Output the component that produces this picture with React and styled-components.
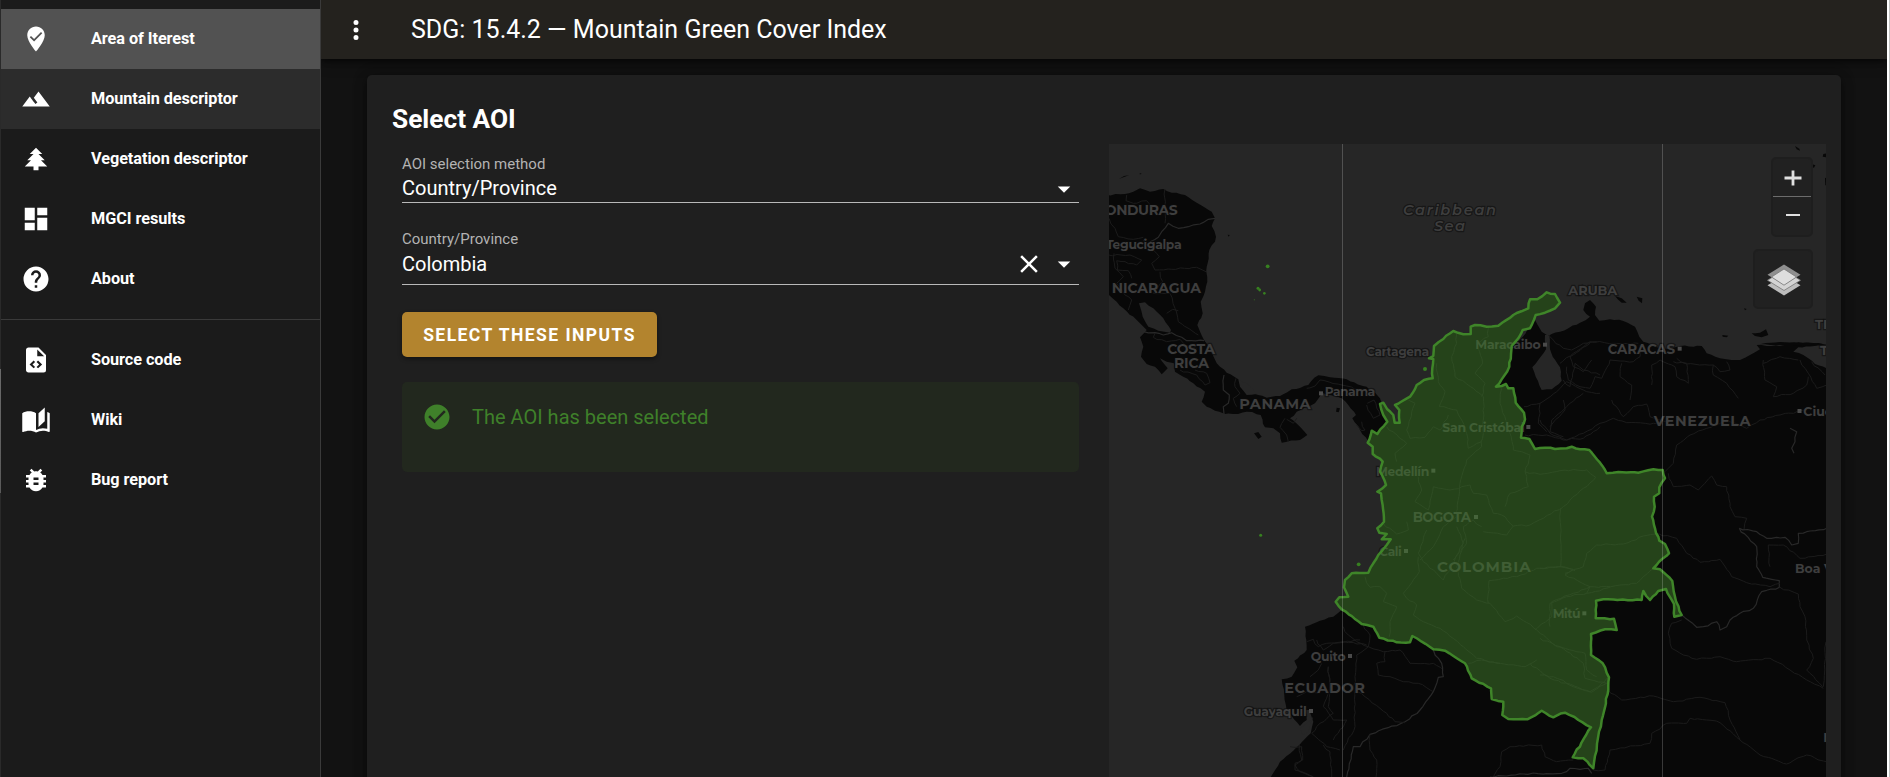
import React from "react";
import styled, { createGlobalStyle, css } from "styled-components";

const GlobalStyle = createGlobalStyle`
  *, *::before, *::after { box-sizing: border-box; }
  body {
    margin: 0;
    background: #121212;
    color: #fff;
    font-family: Roboto, "Liberation Sans", sans-serif;
    overflow: hidden;
  }
`;

/* ---------- layout ---------- */

const Page = styled.div`
  display: flex;
  width: 100vw;
  height: 100vh;
  overflow: hidden;
  background: #121212;
`;

const LeftEdge = styled.div`
  width: 1px;
  flex: none;
  background: linear-gradient(#2a2a2a 369px, #6a6a6a 369px, #5a5a5a 493px, #2a2a2a 493px);
`;

const Drawer = styled.nav`
  position: relative;
  z-index: 1;
  width: 320px;
  flex: none;
  padding-top: 9px;
  background: #1b1b1b;
  border-right: 1px solid #3a3a3a;
`;

const Main = styled.div`
  flex: 1;
  min-width: 0;
  display: flex;
  flex-direction: column;
`;

const RightEdge = styled.div`
  width: 3px;
  flex: none;
  background: #fff;
  border-right: 1px solid #c1c1c1;
`;

const AppBar = styled.header`
  height: 59px;
  flex: none;
  display: flex;
  align-items: center;
  padding: 0 0 0 20px;
  background: #24221e;
  box-shadow: 0 2px 5px rgba(0, 0, 0, 0.5), 0 5px 12px rgba(0, 0, 0, 0.25);
`;

const AppTitle = styled.h1`
  margin: 0 0 0 40px;
  font-size: 25px;
  line-height: 30px;
  font-weight: 400;
  white-space: nowrap;
`;

/* ---------- drawer ---------- */

const NavItem = styled.a`
  height: 60px;
  display: flex;
  align-items: center;
  gap: 40px;
  padding-left: 20px;
  background: ${(p) =>
    p.$state === "active" ? "#525252" : p.$state === "hover" ? "#2c2c2c" : "transparent"};
`;

const NavLabel = styled.span`
  font-size: 16.25px;
  line-height: 20px;
  font-weight: 700;
  letter-spacing: -0.06px;
  white-space: nowrap;
`;

const Divider = styled.hr`
  margin: 10px 0;
  border: 0;
  height: 1px;
  background: #3a3a3a;
`;

/* ---------- card ---------- */

const Content = styled.main`
  flex: 1;
  min-height: 0;
  padding: 16px 46px 0;
`;

const Card = styled.section`
  height: 760px;
  padding: 24px 15px 0 25px;
  border-radius: 5px;
  background: #1f1f1f;
  box-shadow: 0 4px 5px rgba(0, 0, 0, 0.2), 0 5px 13px rgba(0, 0, 0, 0.24), 0 1px 16px rgba(0, 0, 0, 0.2);
`;

const CardTitle = styled.h2`
  margin: 0;
  height: 45px;
  font-size: 26.25px;
  line-height: 40px;
  font-weight: 700;
`;

const Columns = styled.div`
  display: flex;
  gap: 30px;
  padding-left: 10px;
`;

const Form = styled.div`
  width: 677px;
  flex: none;
  display: flex;
  flex-direction: column;
  align-items: stretch;
  padding-top: 10px;
`;

const Field = styled.div`
  height: ${(p) => p.$height}px;
  margin-bottom: ${(p) => p.$gap}px;
  display: flex;
  flex-direction: column;
  border-bottom: 1px solid #b9b9b9;
`;

const FieldLabel = styled.span`
  font-size: 15px;
  line-height: 20px;
  color: #b3b3b3;
`;

const FieldRow = styled.div`
  flex: 1;
  display: flex;
  align-items: center;
  padding-bottom: ${(p) => p.$lift || 0}px;
`;

const FieldValue = styled.span`
  flex: 1;
  padding-bottom: ${(p) => p.$lift || 0}px;
  font-size: 20px;
  line-height: 26px;
`;

const FieldIcons = styled.span`
  display: flex;
  gap: 5px;
  align-items: center;
`;

const Submit = styled.button`
  align-self: flex-start;
  width: 255px;
  height: 45px;
  padding: 0;
  border: 0;
  border-radius: 5px;
  background: #b3842e;
  color: #fff;
  font: 700 17.5px Roboto, "Liberation Sans", sans-serif;
  letter-spacing: 1.45px;
  box-shadow: 0 2px 4px rgba(0, 0, 0, 0.4);
`;

const Alert = styled.div`
  height: 90px;
  margin-top: 25px;
  padding: 20px;
  display: flex;
  align-items: flex-start;
  gap: 20px;
  border-radius: 5px;
  background: #22281e;
  color: #3f802a;
  font-size: 20px;
  line-height: 30px;
`;

/* ---------- map ---------- */

const MapFrame = styled.div`
  position: relative;
  width: 717px;
  height: 640px;
  flex: none;
  overflow: hidden;
  background: #262626;
`;

const MapSvg = styled.svg`
  display: block;
`;

const MapControls = styled.div`
  position: absolute;
  top: 13px;
  right: 13px;
  display: flex;
  flex-direction: column;
  align-items: flex-end;
  gap: 12px;
`;

const controlBox = css`
  border: 2px solid #1e1e1e;
  border-radius: 5px;
  background: #212121;
`;

const ZoomBox = styled.div`
  ${controlBox}
  width: 42px;
  height: 80px;
`;

const ZoomButton = styled.div`
  height: ${(p) => (p.$first ? 38 : 36)}px;
  padding-left: 2px;
  display: flex;
  align-items: center;
  justify-content: center;
  ${(p) => p.$first && "border-bottom: 1px solid #6c6c6c;"}
`;

const LayersBox = styled.div`
  ${controlBox}
  width: 60px;
  height: 60px;
  padding: 1px 0 0 1px;
  display: flex;
  align-items: center;
  justify-content: center;
`;

const MapLabel = styled.text`
  font-family: Montserrat, Inter, "Open Sans", sans-serif;
  font-weight: ${(p) => p.$weight || 700};
  font-style: ${(p) => (p.$italic ? "italic" : "normal")};
  fill: #3e3e3e;
  stroke: rgba(10, 10, 10, 0.55);
  stroke-width: 2.5px;
  paint-order: stroke;
`;

/* ---------- icons ---------- */

const ICONS = {
  marker:
    "M12,2C15.86,2 19,5.14 19,9C19,14.25 12,22 12,22C12,22 5,14.25 5,9C5,5.14 8.14,2 12,2M10.47,14L17,7.41L16,6.4L10.47,12L8,9.5L7,10.5L10.47,14Z",
  mountain: "M14,6L10.25,11L13.1,14.8L11.5,16C9.81,13.75 7,10 7,10L1,18H23L14,6Z",
  tree: "M10,21V18H3L8,13H5L10,8H7L12,3L17,8H14L19,13H16L21,18H14V21H10Z",
  dashboard: "M13,3V9H21V3M13,21H21V11H13M3,21H11V15H3M3,13H11V3H3V13Z",
  help: "M15.07,11.25L14.17,12.17C13.45,12.89 13,13.5 13,15H11V14.5C11,13.39 11.45,12.39 12.17,11.67L13.41,10.41C13.78,10.05 14,9.55 14,9C14,7.89 13.1,7 12,7A2,2 0 0,0 10,9H8A4,4 0 0,1 12,5A4,4 0 0,1 16,9C16,9.88 15.64,10.67 15.07,11.25M13,19H11V17H13M12,2A10,10 0 0,0 2,12A10,10 0 0,0 12,22A10,10 0 0,0 22,12C22,6.47 17.5,2 12,2Z",
  code: "M13,9H18.5L13,3.5V9M6,2H14L20,8V20A2,2 0 0,1 18,22H6C4.89,22 4,21.1 4,20V4C4,2.89 4.89,2 6,2M6.85,15.5L10.1,18.6L11.28,17.5L9.2,15.5L11.28,13.5L10.1,12.4L6.85,15.5M16.9,15.5L13.65,12.4L12.45,13.5L14.5,15.5L12.45,17.5L13.65,18.6L16.9,15.5Z",
  book: "M19 2L14 6.5V17.5L19 13V2M6.5 5C4.55 5 2.45 5.4 1 6.5V21.16C1 21.41 1.25 21.66 1.5 21.66C1.6 21.66 1.65 21.59 1.75 21.59C3.1 20.94 5.05 20.5 6.5 20.5C8.45 20.5 10.55 20.9 12 22C13.35 21.15 15.8 20.5 17.5 20.5C19.15 20.5 20.85 20.81 22.25 21.56C22.35 21.61 22.4 21.59 22.5 21.59C22.75 21.59 23 21.34 23 21.09V6.5C22.4 6.05 21.75 5.75 21 5.5V19C19.9 18.65 18.7 18.5 17.5 18.5C15.8 18.5 13.35 19.15 12 20V6.5C10.55 5.4 8.45 5 6.5 5Z",
  bug: "M14,12H10V10H14M14,16H10V14H14M20,8H17.19C16.74,7.22 16.12,6.55 15.37,6.04L17,4.41L15.59,3L13.42,5.17C12.96,5.06 12.5,5 12,5C11.5,5 11.05,5.06 10.59,5.17L8.41,3L7,4.41L8.62,6.04C7.88,6.55 7.26,7.22 6.81,8H4V10H6.09C6.04,10.33 6,10.66 6,11V12H4V14H6V15C6,15.34 6.04,15.67 6.09,16H4V18H6.81C7.85,19.79 9.78,21 12,21C14.22,21 16.15,19.79 17.19,18H20V16H17.91C17.96,15.67 18,15.34 18,15V14H20V12H18V11C18,10.66 17.96,10.33 17.91,10H20V8Z",
  check:
    "M12 2C6.5 2 2 6.5 2 12S6.5 22 12 22 22 17.5 22 12 17.5 2 12 2M10 17L5 12L6.41 10.59L10 14.17L17.59 6.58L19 8L10 17Z",
  dots: "M12,16A2,2 0 0,1 14,18A2,2 0 0,1 12,20A2,2 0 0,1 10,18A2,2 0 0,1 12,16M12,10A2,2 0 0,1 14,12A2,2 0 0,1 12,14A2,2 0 0,1 10,12A2,2 0 0,1 12,10M12,4A2,2 0 0,1 14,6A2,2 0 0,1 12,8A2,2 0 0,1 10,6A2,2 0 0,1 12,4Z",
  close:
    "M19,6.41L17.59,5L12,10.59L6.41,5L5,6.41L10.59,12L5,17.59L6.41,19L12,13.41L17.59,19L19,17.59L13.41,12L19,6.41Z",
  down: "M7,10L12,15L17,10H7Z",
};

const IconSvg = styled.svg`
  flex: none;
  display: block;
  fill: currentColor;
`;

const Icon = ({ name, size = 30 }) => (
  <IconSvg width={size} height={size} viewBox="0 0 24 24">
    <path fillRule="evenodd" d={ICONS[name]} />
  </IconSvg>
);

/* ---------- map geometry ---------- */

const SHEETS = {
  central: [1100, 140],
  north: [1300, 260],
  south: [1290, 500],
  caribbean: [1560, 60],
  east: [1540, 400],
  pacific: [1100, 450],
};

const at = (sheet, flat) => {
  const [ox, oy] = SHEETS[sheet];
  const nums = flat.trim().split(/\s+/).map(Number);
  const out = [];
  for (let i = 0; i < nums.length; i += 2) out.push([ox + nums[i] / 3, oy + nums[i + 1] / 3]);
  return out;
};

// Adds small deterministic wiggles between vertices, as a coast or river has.
const rough = (pts, amount, closed) => {
  let seed = 7;
  const rnd = () => {
    seed = (seed * 16807) % 2147483647;
    return seed / 2147483647 - 0.5;
  };
  let d = "";
  pts.forEach((p, i) => {
    d += `${i ? "L" : "M"}${p[0].toFixed(1)} ${p[1].toFixed(1)}`;
    const q = pts[i + 1] || (closed ? pts[0] : null);
    if (!q) return;
    const n = Math.min(8, Math.floor(Math.hypot(q[0] - p[0], q[1] - p[1]) / 4));
    for (let k = 1; k < n; k += 1) {
      const t = k / n;
      d += `L${(p[0] + (q[0] - p[0]) * t + rnd() * amount).toFixed(1)} ${(p[1] + (q[1] - p[1]) * t + rnd() * amount).toFixed(1)}`;
    }
  });
  return closed ? `${d}Z` : d;
};

const COLOMBIA = rough(
  [
    ...at("north", `740 97 765 102 780 128 765 145 735 158 707 165 690 205 668 210 655 235 635 258 628 320 612 348
      588 380 605 378 618 372 625 385 640 385 647 428 672 458 675 478 665 500 663 533 688 537 705 567 735 563 765 567
      800 565 815 560 840 568 868 570 900 608`),
    ...at("east", `200 220 235 216 295 218 340 208 368 210 375 235 358 262 358 280 342 290 344 320 336 350 345 385
      358 422 375 432 387 460 340 505 360 508 397 543 405 590 425 645 403 650 402 612 378 567 355 573 330 600 310 573
      305 600 190 598 168 602 167 655 222 656 230 690 195 688 153 702 153 765 188 790 207 832 205 870 185 960 160 1105
      130 1075 98 1072 153 982`),
    ...at("south", `865 660 825 638 790 652 755 632 712 658 655 657 637 645 640 605 605 597 603 565 545 535 525 490
      465 452 430 448 395 425 367 408 360 427 320 427 268 413 250 380 215 372 155 328 137 305 148 292 175 290 162 262
      165 240 185 220 235 218 250 190 265 165 290 135 302 118 275 118 290 102 268 98 262 85 282 65 275 0`),
    ...at("north", `243 700 232 695 258 675 240 635 248 605 218 582 218 560 203 548 215 512 232 522 262 485 250 465
      240 432 250 428 262 448 280 465 284 488 299 488 298 450 285 435 330 410 350 375 372 360 398 355 397 325 400 297
      387 295 400 288 402 258 430 237 460 213 490 223 512 222 512 200 525 195 560 200 595 197 640 165 685 145 690 118
      712 118`),
  ],
  1.2,
  true
);

const CENTRAL_AMERICA = rough(
  at("central", `20 165 75 162 100 155 120 145 150 155 190 147 215 158 255 165 290 188 335 215 345 235 335 258 348 290
    345 305 328 330 320 380 322 425 315 455 302 485 308 520 292 555 312 600 330 632 350 670 380 698 415 718 440 755
    465 762 500 773 540 768 575 748 625 735 655 706 690 712 740 718 800 740 825 758 840 775 880 850 805 905 780 870
    757 835 768 825 745 795 725 775 690 765 665 758 645 790 625 800 590 815 570 835 600 860 622 885 600 900 545 908
    540 880 520 865 495 862 482 825 440 815 400 822 375 822 345 812 320 800 305 785 315 755 280 730 250 710 225 695
    222 670 200 665 180 655 203 685 185 703 165 680 140 672 123 650 130 620 120 592 140 570 110 540 70 505 27 465
    20 460`),
  1.6,
  true
);

const SOUTH_AMERICA = rough(
  [
    ...at("pacific", `725 480 700 500 660 512 615 530 620 600 583 632 592 652 575 680 545 688 553 735 560 780 600 828
      620 810 615 780 628 780 640 815 632 850 598 885 540 935 510 985`),
    [1832, 779],
    [1832, 370],
    ...at("caribbean", `800 925 765 912 745 895 730 885 700 875 715 862 800 852 740 848 690 850 660 858 590 855 600 868
      570 885 540 900 515 900 480 895 440 880 425 858 360 858 330 868 290 862 250 845 238 830 225 800 190 783 150 778
      118 782 105 765 108 740 90 720 75 730 70 750 90 770 60 788 0 815`),
    ...at("north", "745 228 725 215 705 180"),
    [1520, 340],
    [1450, 400],
    [1400, 500],
    [1370, 600],
  ],
  1.4,
  true
);

const LAKES = [
  at("central", "117 490 135 487 160 505 190 535 213 570 210 578 175 572 145 560 128 530"),
  at("north", "735 225 738 268 715 300 697 322 707 350 725 390 755 388 785 362 780 322 758 290 750 268 748 225"),
  at("central", "415 718 440 730 470 762 440 765 420 740"),
  at("pacific", "640 800 625 845 608 855 600 835 622 818"),
];

const ISLETS = [
  at("caribbean", "575 820 600 818 618 808 625 825 605 832 585 828"),
  at("caribbean", "165 708 185 715 200 728 185 728"),
  at("caribbean", "230 710 247 715 246 730 236 722"),
  at("caribbean", "487 825 505 827 500 832 488 830"),
  at("caribbean", "552 745 560 747 555 751"),
  at("caribbean", "705 258 718 266 720 272 710 268"),
  at("caribbean", "790 282 800 280 800 292 788 290"),
  at("caribbean", "755 312 766 316 762 323 756 322"),
  at("caribbean", "795 355 802 352 802 380 796 375"),
  at("central", "462 880 475 876 485 890 475 897"),
  at("central", "710 803 720 805 716 817 708 815"),
  at("central", "135 535 150 532 155 546 138 545"),
  at("central", "57 117 72 108 87 106 70 112"),
  at("central", "117 102 124 99 123 103"),
  at("central", "383 284 389 285 386 290"),
];

const BORDERS = [
  ["central", "345 235 325 238 300 252 265 260 235 265 205 250 185 275 175 292 150 305", 1],
  ["central", "130 575 165 578 190 585 215 578 245 592 260 602 312 602", 1],
  ["central", "372 705 370 750 388 765 385 790 370 800 372 822", 1],
  ["central", "195 147 195 250"],
  ["central", "27 235 45 265 55 290 100 298 130 292"],
  ["central", "80 165 78 182 100 190 140 182 155 200"],
  ["central", "27 345 90 345 125 360 110 375 50 362 52 390 85 392 95 415"],
  ["central", "130 300 160 330 178 350 155 370 165 390 215 388 290 382 318 395"],
  ["central", "180 395 188 425 160 460 210 460 225 505 235 545 295 585"],
  ["central", "200 520 218 508 235 512"],
  ["central", "42 340 45 385 70 410 50 430 75 465 95 480 85 510"],
  ["central", "165 580 160 592 200 605 240 598 255 615 290 625"],
  ["central", "240 690 290 705 315 735 330 728 320 700 285 690"],
  ["central", "408 715 405 740 420 760 400 775 410 800"],
  ["central", "555 835 540 862 560 885 565 905"],
  ["central", "560 838 580 850 590 835"],
  ["central", "620 745 645 738 660 720 740 738 790 755"],
  ["central", "800 795 820 835 840 825 822 780 802 790"],
  ["central", "770 855 785 872 795 870 785 845"],
  ["north", "470 222 470 250 455 290 465 350 520 385 550 410 550 480 545 560 500 600 480 670 468 760"],
  ["north", "565 205 565 230 530 250 548 310 525 340 555 370 545 410"],
  ["north", "410 310 415 365 435 395 418 440 470 450 485 480 500 520 505 565 545 545"],
  ["north", "325 420 345 430 320 510 330 535 375 532 400 500 420 510 445 465"],
  ["north", "260 500 320 550 285 580 290 605"],
  ["north", "605 385 600 430 630 520 640 570 665 575 690 585 675 635 685 680 630 700 615 740"],
  ["north", "675 635 720 643 780 632 860 630 887 652 850 685 790 740 730 775 690 795 640 798 620 825 550 815"],
  ["north", "355 650 365 690 345 725 385 750 400 680 450 690 510 675 520 700 560 705 580 760 605 765 640 798"],
  ["north", "782 745 782 920"],
  ["north", "470 770 430 800 400 860 360 900"],
  ["north", "545 800 520 780 490 800 500 850 460 900"],
  ["north", "250 790 290 822 325 810 320 785"],
  ["north", "745 225 760 240 790 265 815 270 850 250 890 245"],
  ["north", "672 440 720 430 770 395 800 365 860 395 900 400"],
  ["north", "790 360 810 380 825 310 850 330 900 345"],
  ["north", "675 525 740 525 790 540 850 535 900 500"],
  ["north", "850 400 810 430 755 480 750 515 790 530"],
  ["north", "720 430 720 460 715 490 740 515"],
  ["south", "385 170 388 215 340 280 350 295 380 315 370 345 400 365 450 385 520 440 560 475 620 490 705 500 740 480"],
  ["south", "525 115 500 200 515 265 560 300 600 310 645 365 680 348 740 390 800 440 885 460 890 510 920 530"],
  ["south", "595 310 597 242 680 230 740 205 820 200 855 212"],
  ["south", "225 230 240 262 270 260 290 280 280 305 320 320 300 365 298 410"],
  ["south", "535 490 575 480 630 490"],
  ["south", "735 390 785 350 785 305 850 280 900 260 960 260"],
  ["south", "720 490 780 535 850 560 905 577 960 530"],
  ["south", "410 90 385 160 400 185 460 240 520 130 500 80"],
  ["south", "220 375 240 405 235 440 280 455 330 450 360 490 430 490 460 510"],
  ["south", "430 450 455 490 460 530 445 532 430 575 390 630 345 665 240 703 210 740 190 740 170 831", 1],
  ["south", "285 455 285 485 260 490 265 525 300 530 340 545 385 550 430 575"],
  ["south", "195 565 225 590 270 625 315 665 345 668"],
  ["south", "160 380 175 405 200 425 235 440 200 465 195 530 192 570 195 680 160 750"],
  ["south", "80 420 100 450 130 430 210 420"],
  ["south", "115 500 120 560 100 620 130 660 170 660 130 720"],
  ["south", "240 703 240 750 260 780 258 831"],
  ["south", "610 831 630 800 635 755 660 740 755 735 765 770 800 785 850 780"],
  ["south", "600 831 700 822 815 820 840 805 870 808 895 805 905 820", 1],
  ["south", "0 740 35 740 38 780 15 790 15 810 35 815 70 830"],
  ["pacific", "620 575 640 568 655 590 680 580 730 575 800 585"],
  ["pacific", "630 680 655 660 665 640"],
  ["pacific", "685 650 690 700 685 770 700 790 660 820 635 850 680 890 720 900"],
  ["pacific", "590 740 620 725 655 730"],
  ["pacific", "598 885 605 930 585 945 600 965 640 981"],
  ["pacific", "670 885 690 905 695 981"],
  ["caribbean", "0 910 40 880 90 845 160 850 235 850"],
  ["caribbean", "90 850 30 890 40 920 70 935 95 900"],
  ["caribbean", "20 920 25 960 60 980 90 985 105 950 125 955 150 900 220 905 240 890 240 855"],
  ["caribbean", "185 910 180 950 215 975 210 1020"],
  ["caribbean", "340 905 380 910 385 970 350 950 345 920 300 900 275 915 275 975"],
  ["caribbean", "350 895 380 912 460 915 480 935 510 930 500 905"],
  ["caribbean", "460 915 460 945 500 970 535 1015"],
  ["caribbean", "610 900 615 960 650 980 640 1010 700 1000 740 975 745 950"],
  ["caribbean", "720 900 745 940 770 985 800 975"],
  ["caribbean", "755 905 795 945"],
  ["caribbean", "610 910 660 890 715 900"],
  ["east", "375 215 400 190 410 135 450 105 500 85 560 60 620 85 660 60 720 45 800 30"],
  ["east", "0 60 30 100 80 120 130 100 180 70 220 55 260 68 370 72"],
  ["east", "215 0 250 50 280 20 320 12 330 50 400 72"],
  ["east", "30 80 75 30 70 0"],
  ["east", "385 220 400 260 450 255 475 270 515 228 530 255 560 260 570 320 585 350 620 355 612 390"],
  ["east", "598 385 650 440 650 500 668 532 718 542 718 562 665 575 640 625 600 640 570 660 560 680 540 690 530 665 490 680 470 682 425 645", 1],
  ["east", "598 385 650 395 680 415 735 412 755 435 775 430 775 400 800 395 860 385", 1],
  ["east", "358 402 410 415 440 460 480 487 540 478 575 530 620 548 690 560 720 550"],
  ["east", "690 500 685 435 730 435 780 475 860 462"],
  ["east", "425 660 395 670 385 700 395 745 430 765 470 778 540 770 590 785 690 775 750 810 800 840 850 865"],
  ["east", "720 562 775 582 780 620 795 650 800 720 820 775 800 810 848 860"],
  ["east", "858 725 850 860"],
  ["east", "205 870 245 900 340 888 400 905 480 892 555 908 570 960 600 1018"],
  ["east", "160 1110 195 1110 210 1050 330 1030 335 1000 380 970 440 970 450 955 500 960 540 968 600 1020 660 1065 740 1092 800 1065 860 1085"],
  ["east", "75 520 130 500 140 460 170 435 250 432 310 408 358 402"],
  ["east", "0 505 60 500 100 508 75 525 150 560 140 580 240 555 290 550 340 505"],
  ["east", "30 680 30 610 80 590 140 580"],
  ["east", "0 715 60 740 130 790 135 835 200 850 150 875 80 850 40 830 0 825"],
  ["east", "750 85 770 95 765 125 755 145 762 160", 1],
];

// sheet, text, x start, x end, baseline, size, marker x and y
const LABELS = [
  ["central", "HONDURAS", -18, 233, 226, 14],
  ["central", "Tegucigalpa", 18, 245, 326, 12.5],
  ["central", "NICARAGUA", 35, 303, 459, 14],
  ["central", "COSTA", 202, 345, 641, 14],
  ["central", "RICA", 222, 327, 683, 14],
  ["central", "PANAMA", 418, 632, 808, 14.5],
  ["central", "Panama", 674, 826, 769, 12.5, 663, 760],
  ["central", "Cartagena", 798, 988, 647, 12.5],
  ["north", "Maracaibo", 526, 722, 267, 12.5, 735, 254],
  ["north", "San Cristóbal", 427, 674, 515, 12.5, 685, 501],
  ["north", "Medellín", 228, 388, 647, 12.5, 400, 632],
  ["north", "BOGOTA", 338, 513, 785, 13.5, 528, 771],
  ["south", "Cali", 268, 335, 167, 12.5, 348, 153],
  ["south", "COLOMBIA", 441, 722, 217, 15],
  ["south", "Mitú", 788, 872, 354, 12.5, 883, 340],
  ["south", "Quito", 62, 167, 482, 12.5, 180, 468],
  ["south", "ECUADOR", -17, 225, 578, 14.5],
  ["pacific", "Guayaquil", 431, 620, 798, 12.5, 633, 783],
  ["caribbean", "ARUBA", 25, 172, 705, 13],
  ["caribbean", "CARACAS", 143, 345, 881, 13.5, 359, 866],
  ["east", "VENEZUELA", 341, 632, 78, 14.5],
];

const CLIPPED_LABELS = [
  ["caribbean", "TRINIDAD", 765, 808, 13],
  ["caribbean", "TOBAGO", 780, 884, 13],
  ["east", "Ciudad", 790, 47, 12.5],
  ["east", "Boa Vista", 765, 520, 12.5],
  ["east", "Manaus", 850, 1027, 12.5],
];

const ISLANDS = [
  ["central", 503, 379, 1.9],
  ["central", 474, 445, 1.5],
  ["central", 479, 450, 1.4],
  ["central", 493, 460, 1.3],
  ["central", 463, 479, 0.5],
  ["north", 375, 327, 2],
  ["pacific", 482, 256, 1.5],
  ["pacific", 776, 343, 1.9],
];

const RegionMap = () => (
  <MapSvg width="717" height="633" viewBox="1109 144 717 633">
    <g fill="#080808">
      <path d={CENTRAL_AMERICA} />
      <path d={SOUTH_AMERICA} />
      <path d={COLOMBIA} />
      {ISLETS.map((pts, i) => (
        <path key={i} d={rough(pts, 0.6, true)} />
      ))}
      <path d={rough(at("caribbean", "590 852 660 846 730 848 788 850 740 857 670 856"), 0.8, true)} />
    </g>
    <g fill="#262626">
      {LAKES.map((pts, i) => (
        <path key={i} d={rough(pts, 1, true)} />
      ))}
    </g>
    <g fill="none" strokeLinejoin="round">
      {BORDERS.map(([sheet, pts, major], i) => (
        <path
          key={i}
          d={rough(at(sheet, pts), 1.8, false)}
          stroke={major ? "#292929" : "#1b1b1b"}
          strokeWidth={major ? 1.2 : 1}
        />
      ))}
    </g>
    {LABELS.map(([sheet, text, x0, x1, y, size, mx, my]) => {
      const [ox, oy] = SHEETS[sheet];
      return (
        <g key={text}>
          <MapLabel x={ox + x0 / 3} y={oy + y / 3} fontSize={size} textLength={(x1 - x0) / 3}>
            {text}
          </MapLabel>
          {mx && <rect x={ox + mx / 3 - 2} y={oy + my / 3 - 2} width="4" height="4" fill="#4a4a4a" />}
        </g>
      );
    })}
    {CLIPPED_LABELS.map(([sheet, text, x, y, size]) => (
      <MapLabel key={text} x={SHEETS[sheet][0] + x / 3} y={SHEETS[sheet][1] + y / 3} fontSize={size}>
        {text}
      </MapLabel>
    ))}
    <rect x="1797.5" y="409" width="4" height="4" fill="#4a4a4a" />
    <MapLabel x="1403" y="215.3" fontSize="14.5" textLength="93" $italic $weight={600}>
      Caribbean
    </MapLabel>
    <MapLabel x="1434" y="231" fontSize="14.5" textLength="31" $italic $weight={600}>
      Sea
    </MapLabel>
    <path
      d={COLOMBIA}
      fill="#427e2c"
      fillOpacity="0.5"
      stroke="#3f8529"
      strokeWidth="2.5"
      strokeLinejoin="round"
    />
    {ISLANDS.map(([sheet, x, y, r], i) => (
      <circle key={i} cx={SHEETS[sheet][0] + x / 3} cy={SHEETS[sheet][1] + y / 3} r={r} fill="#378020" />
    ))}
    <path d="M1342.5 144V777M1662.5 144V777" stroke="#fff" strokeOpacity="0.2" />
  </MapSvg>
);

const LayersIcon = () => (
  <svg width="34" height="34" viewBox="0 0 34 34">
    <path d="M17 12.5L33.5 22.3L17 32.5L.5 22.3Z" fill="#bdbdbd" />
    <path d="M17 7L33.5 17.3L17 27.5L.5 17.3Z" fill="#d4d4d4" stroke="#777" strokeWidth=".8" />
    <path d="M17 1.5L33.5 11.8L17 22L.5 11.8Z" fill="#8f8f8f" />
    <path d="M17 6L29.5 14L17 22.2L4.5 14Z" fill="#dedede" stroke="#777" strokeWidth=".8" />
  </svg>
);

/* ---------- page ---------- */

const PRIMARY = [
  ["marker", "Area of Iterest", "active"],
  ["mountain", "Mountain descriptor", "hover"],
  ["tree", "Vegetation descriptor"],
  ["dashboard", "MGCI results"],
  ["help", "About"],
];

const SECONDARY = [
  ["code", "Source code"],
  ["book", "Wiki"],
  ["bug", "Bug report"],
];

const NavList = ({ items }) =>
  items.map(([icon, label, state]) => (
    <NavItem key={label} $state={state}>
      <Icon name={icon} />
      <NavLabel>{label}</NavLabel>
    </NavItem>
  ));

export default function App() {
  return (
    <Page>
      <GlobalStyle />
      <LeftEdge />
      <Drawer>
        <NavList items={PRIMARY} />
        <Divider />
        <NavList items={SECONDARY} />
      </Drawer>
      <Main>
        <AppBar>
          <Icon name="dots" />
          <AppTitle>SDG: 15.4.2 — Mountain Green Cover Index</AppTitle>
        </AppBar>
        <Content>
          <Card>
            <CardTitle>Select AOI</CardTitle>
            <Columns>
              <Form>
                <Field $height={49} $gap={26}>
                  <FieldLabel>AOI selection method</FieldLabel>
                  <FieldRow>
                    <FieldValue $lift={3}>Country/Province</FieldValue>
                    <Icon name="down" />
                  </FieldRow>
                </Field>
                <Field $height={56} $gap={27}>
                  <FieldLabel>Country/Province</FieldLabel>
                  <FieldRow $lift={6}>
                    <FieldValue>Colombia</FieldValue>
                    <FieldIcons>
                      <Icon name="close" />
                      <Icon name="down" />
                    </FieldIcons>
                  </FieldRow>
                </Field>
                <Submit>SELECT THESE INPUTS</Submit>
                <Alert>
                  <Icon name="check" />
                  <span>The AOI has been selected</span>
                </Alert>
              </Form>
              <MapFrame>
                <RegionMap />
                <MapControls>
                  <ZoomBox>
                    <ZoomButton $first>
                      <svg width="18" height="18" viewBox="0 0 18 18">
                        <path d="M.5 9H17.5M9 1.5V16.5" stroke="#e0e0e0" strokeWidth="2.8" />
                      </svg>
                    </ZoomButton>
                    <ZoomButton>
                      <svg width="18" height="18" viewBox="0 0 18 18">
                        <path d="M2 9H16" stroke="#e0e0e0" strokeWidth="2" />
                      </svg>
                    </ZoomButton>
                  </ZoomBox>
                  <LayersBox>
                    <LayersIcon />
                  </LayersBox>
                </MapControls>
              </MapFrame>
            </Columns>
          </Card>
        </Content>
      </Main>
      <RightEdge />
    </Page>
  );
}
